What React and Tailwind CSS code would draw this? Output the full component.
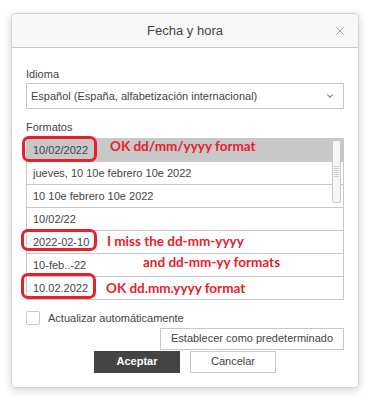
import { ChevronDown, X } from 'lucide-react';

const rows = [
  '10/02/2022',
  'jueves, 10 10e febrero 10e 2022',
  '10 10e febrero 10e 2022',
  '10/02/22',
  '2022-02-10',
  '10-feb..-22',
  '10.02.2022',
];

function Note({ className, children }) {
  return (
    <div
      className={`absolute whitespace-nowrap text-[13.5px] font-bold leading-none text-[#e8202a] ${className}`}
      style={{ fontFamily: 'Lato, sans-serif' }}
    >
      {children}
    </div>
  );
}

function Ring({ className }) {
  return <div className={`absolute rounded-[7px] border-[3px] border-[#e8202a] ${className}`} />;
}

export default function App() {
  return (
    <div
      className="h-[402px] w-[371px] bg-white pl-[11px] pt-[13px] text-[#444]"
      style={{ fontFamily: '"Liberation Sans", Arial, sans-serif' }}
    >
      <div className="h-[375px] w-[348px] overflow-hidden rounded-[4px] border border-[#d4d4d4] bg-white shadow-[0_2px_8px_rgba(0,0,0,0.18)]">
        <div className="grid h-[34px] grid-cols-[40px_1fr_40px] items-center border-b border-[#cbcbcb] bg-[#f7f7f7] text-[13px]">
          <span />
          <span className="text-center">Fecha y hora</span>
          <span className="flex justify-end pr-[11px]">
            <X className="h-[14px] w-[14px] text-[#8a8a8a]" strokeWidth={1.3} />
          </span>
        </div>

        <div className="px-[14px] pt-[18px] text-[11px]">
          <div className="leading-[16px]">Idioma</div>
          <div className="mt-[1px] flex h-[26px] items-center justify-between border border-[#c8c8c8] pl-[4px] pr-[8px]">
            <span>Español (España, alfabetización internacional)</span>
            <ChevronDown className="h-[10px] w-[10px] text-[#666]" strokeWidth={2.5} />
          </div>

          <div className="mt-[10px] leading-[16px]">Formatos</div>
          <div className="relative mt-[3px]">
            <div className="border border-b-0 border-[#c8c8c8]">
              {rows.map((r, i) => (
                <div
                  key={r}
                  className={`flex h-[23px] items-center border-b border-[#c8c8c8] pl-[6px] ${i === 0 ? 'bg-[#c8c8c8]' : ''}`}
                >
                  {r}
                </div>
              ))}
            </div>
            <div className="absolute left-[306px] top-[2px] flex h-[63px] w-[9px] flex-col items-center justify-center gap-[1px] rounded-[2px] border border-[#c6c6c6] bg-[#f6f6f6]">
              {[0, 1, 2, 3, 4, 5].map(n => (
                <div key={n} className="h-px w-[5px] bg-[#cfcfcf]" />
              ))}
            </div>

            <Ring className="-left-[4px] -top-[2px] h-[26px] w-[75px]" />
            <Ring className="-left-[5px] top-[91px] h-[22px] w-[76px]" />
            <Ring className="-left-[5px] top-[135px] h-[26px] w-[75px]" />

            <Note className="left-[84px] top-[2px]">OK dd/mm/yyyy format</Note>
            <Note className="left-[81px] top-[97px]">I miss the dd-mm-yyyy</Note>
            <Note className="left-[117px] top-[118px]">and dd-mm-yy formats</Note>
            <Note className="left-[80px] top-[144px]">OK dd.mm.yyyy format</Note>
          </div>

          <div className="mt-[10px] flex items-center gap-[8px]">
            <div className="h-[14px] w-[14px] rounded-[2px] border border-[#c8c8c8]" />
            <span>Actualizar automáticamente</span>
          </div>
          <div className="mt-[1px] flex justify-end">
            <button className="h-[22px] w-[184px] border border-[#c8c8c8] bg-white text-[11px] text-[#444]">
              Establecer como predeterminado
            </button>
          </div>
          <div className="mt-px flex justify-center gap-[10px]">
            <button className="h-[22px] w-[86px] bg-[#444] text-[11px] font-bold text-white">Aceptar</button>
            <button className="h-[22px] w-[86px] border border-[#c8c8c8] bg-white text-[11px] text-[#444]">Cancelar</button>
          </div>
        </div>
      </div>
    </div>
  );
}
